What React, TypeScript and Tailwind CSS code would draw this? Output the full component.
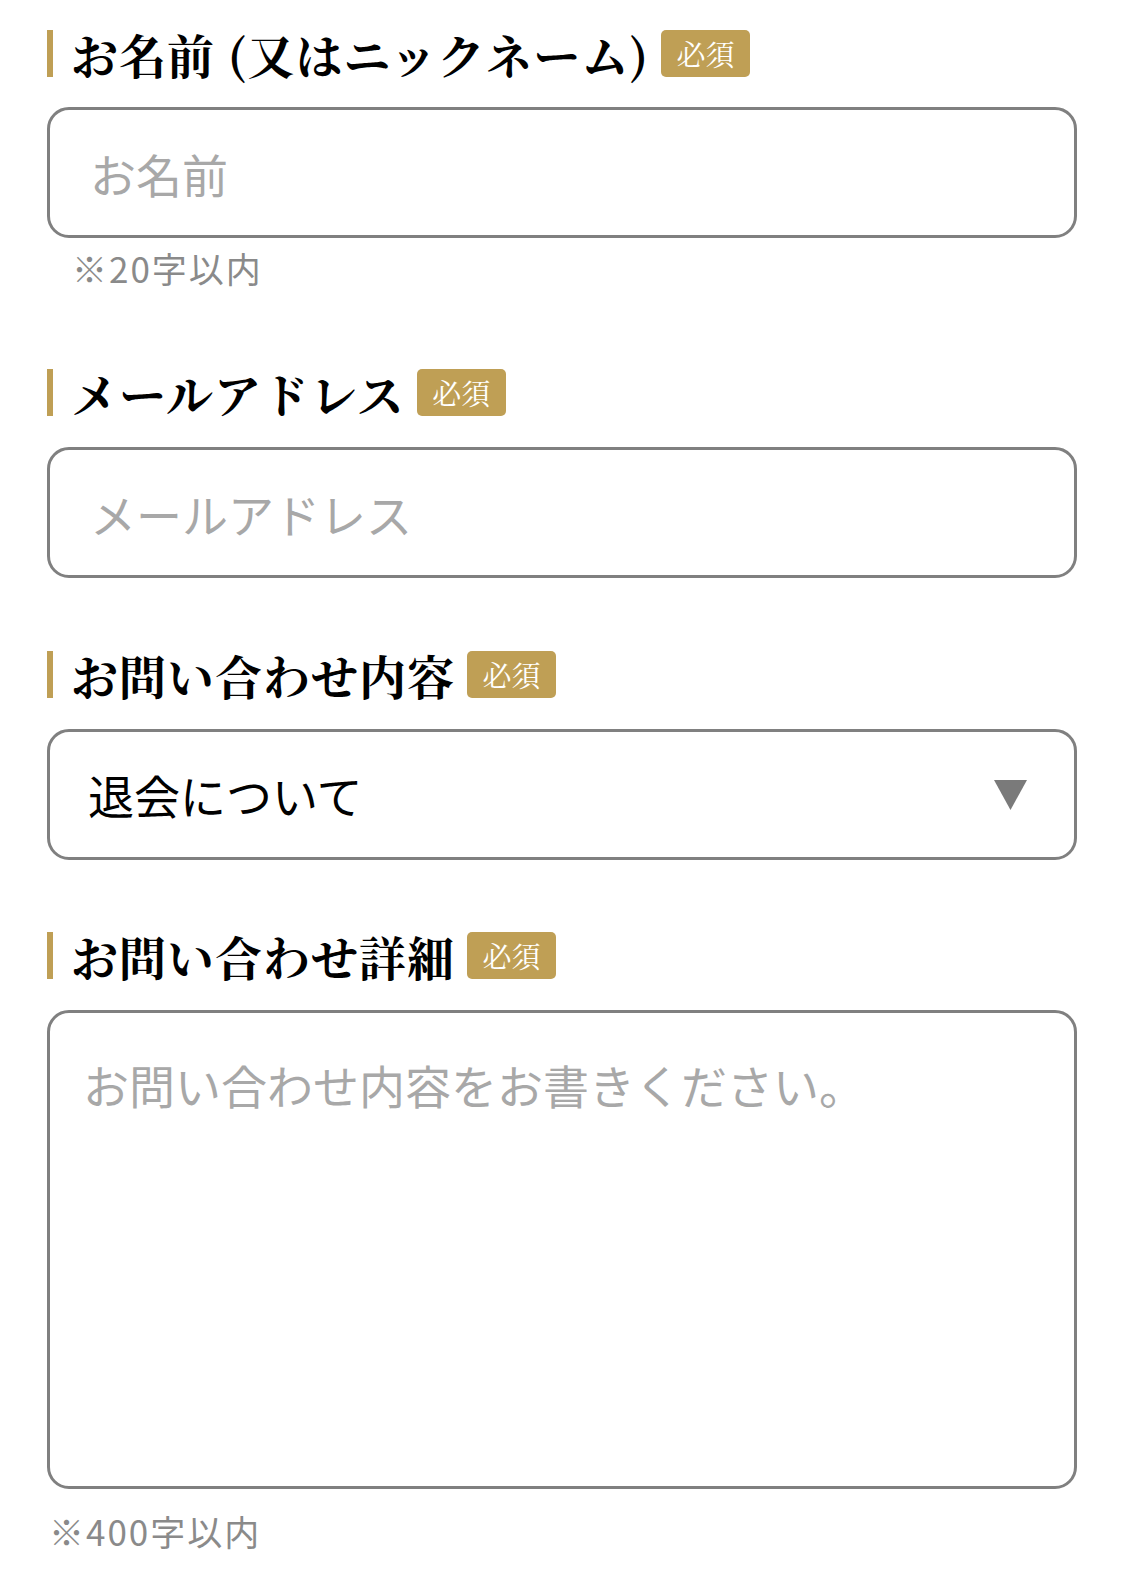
const serif = "font-['Noto_Serif_CJK_JP','Noto_Serif_JP','Liberation_Serif','Noto_Sans_CJK_JP',serif]"
const sans = "font-['Noto_Sans_CJK_JP','Liberation_Sans',sans-serif]"

function Label({ text }: { text: string }) {
  return (
    <div className="flex items-center h-[47px]">
      <div className={`border-l-[6px] border-[#bf9f55] pl-[18px] h-[47px] flex items-center text-[47px] leading-none font-bold text-black tracking-[1px] ${serif}`}>
        {text}
      </div>
      <span className={`ml-[12px] flex items-center justify-center w-[89px] h-[47px] rounded-[5px] bg-[#bf9f55] text-white text-[29px] leading-none ${serif}`}>
        必須
      </span>
    </div>
  )
}

const boxCls =
  'block w-full border-[3px] border-[#808080] rounded-[22px] bg-white outline-none text-[46px] text-black placeholder:text-[#a8a8a8]'

export default function App() {
  return (
    <div className={`w-full overflow-hidden bg-white pl-[47px] pr-[48px] pt-[30px] pb-[20px] ${sans}`}>
      {/* 名前 */}
      <Label text="お名前 (又はニックネーム)" />
      <input className={`${boxCls} ${sans} h-[131px] mt-[30px] px-[40px]`} placeholder="お名前" />
      <p className="mt-[10px] ml-[25px] text-[35px] leading-[40px] tracking-[2px] text-[#8a8a8a]">※20字以内</p>

      {/* メール */}
      <div className="mt-[81px]">
        <Label text="メールアドレス" />
      </div>
      <input className={`${boxCls} ${sans} h-[131px] mt-[31px] px-[40px]`} placeholder="メールアドレス" />

      {/* 内容 */}
      <div className="mt-[73px]">
        <Label text="お問い合わせ内容" />
      </div>
      <div className="relative mt-[31px]">
        <select
          className={`${boxCls} ${sans} appearance-none h-[131px] pl-[38px] pr-[80px]`}
          defaultValue="退会について"
        >
          <option>退会について</option>
          <option>その他</option>
        </select>
        <svg className="absolute right-[50px] top-[51px] pointer-events-none" width="33" height="30" viewBox="0 0 33 30">
          <path d="M0 0 H33 L16.5 30 Z" fill="#7a7a7a" />
        </svg>
      </div>

      {/* 詳細 */}
      <div className="mt-[72px]">
        <Label text="お問い合わせ詳細" />
      </div>
      <textarea
        className={`${boxCls} ${sans} resize-none h-[479px] mt-[31px] px-[33px] pt-[38px] leading-[66px]`}
        placeholder="お問い合わせ内容をお書きください。"
      />
      <p className="mt-[22px] ml-[2px] text-[35px] leading-[40px] tracking-[2px] text-[#8a8a8a]">※400字以内</p>
    </div>
  )
}
